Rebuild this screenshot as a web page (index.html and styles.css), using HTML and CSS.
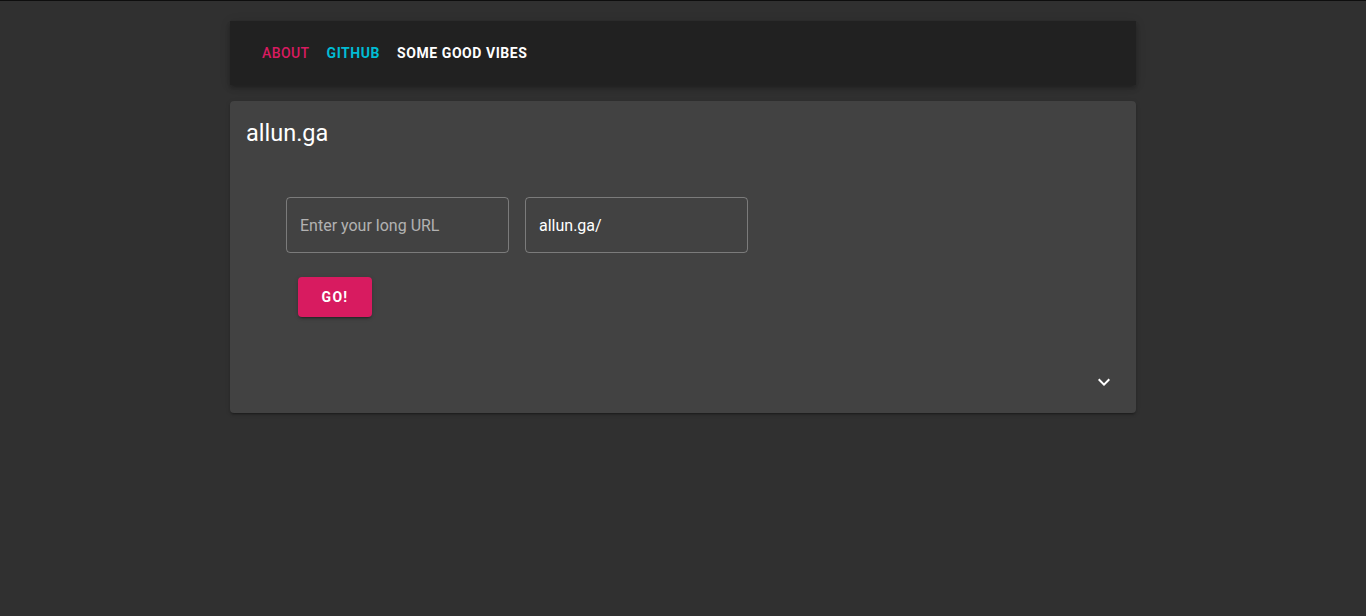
FILE: index.html
```html
<!DOCTYPE html>
<html lang="en">
<head>
    <meta charset="UTF-8">
    <meta name="viewport" content="width=device-width, initial-scale=1.0">
    <title>allun.ga</title>
    <link rel="stylesheet" href="styles.css">
</head>
<body>
    <div class="container">
        <nav class="toolbar">
            <a class="nav-link nav-about" href="#">About</a>
            <a class="nav-link nav-github" href="#">GitHub</a>
            <a class="nav-link nav-vibes" href="#">Some good vibes</a>
        </nav>

        <div class="card">
            <div class="card-title">allun.ga</div>
            <div class="card-body">
                <div class="fields">
                    <input class="field" type="text" placeholder="Enter your long URL">
                    <input class="field" type="text" value="allun.ga/">
                </div>
                <button class="btn-go">Go!</button>
            </div>
            <div class="card-actions">
                <svg class="icon-expand" viewBox="0 0 24 24" width="24" height="24">
                    <path d="M16.59 8.59L12 13.17 7.41 8.59 6 10l6 6 6-6z" fill="#ffffff"/>
                </svg>
            </div>
        </div>
    </div>
</body>
</html>
```

FILE: styles.css
```css
html, body {
    margin: 0;
    padding: 0;
}
body {
    background: #303030;
    border-top: 1px solid #0e0e0e;
    font-family: Roboto, "Liberation Sans", sans-serif;
    color: #ffffff;
    min-height: 615px;
}
.container {
    width: 906px;
    margin: 0 auto;
    padding-top: 20px;
}
.toolbar {
    display: flex;
    align-items: center;
    gap: 17px;
    height: 64px;
    padding: 0 32px;
    background: #212121;
    box-shadow: 0 2px 4px -1px rgba(0, 0, 0, .2), 0 4px 5px 0 rgba(0, 0, 0, .14), 0 1px 10px 0 rgba(0, 0, 0, .12);
}
.nav-link {
    font-size: 14px;
    font-weight: 700;
    text-transform: uppercase;
    letter-spacing: .04em;
    text-decoration: none;
}
.nav-about {
    color: #d81b60;
    font-weight: 500;
    letter-spacing: .03em;
}
.nav-github {
    color: #00bcd4;
}
.nav-vibes {
    color: #ffffff;
}
.card {
    margin-top: 16px;
    background: #424242;
    border-radius: 4px;
    box-shadow: 0 3px 1px -2px rgba(0, 0, 0, .2), 0 2px 2px 0 rgba(0, 0, 0, .14), 0 1px 5px 0 rgba(0, 0, 0, .12);
}
.card-title {
    padding: 16px 16px 0;
    font-size: 23.5px;
    line-height: 32px;
}
.card-body {
    padding: 48px 56px 0;
}
.fields {
    display: flex;
    gap: 16px;
}
.field {
    box-sizing: border-box;
    width: 223px;
    height: 56px;
    padding: 0 13px;
    background: transparent;
    border: 1px solid rgba(255, 255, 255, .3);
    border-radius: 4px;
    font-family: Roboto, "Liberation Sans", sans-serif;
    font-size: 16px;
    color: #ffffff;
    outline: none;
}
.field::placeholder {
    color: rgba(255, 255, 255, .6);
}
.btn-go {
    display: block;
    margin: 24px 0 0 12px;
    width: 74px;
    height: 40px;
    background: #d81b60;
    border: none;
    border-radius: 4px;
    color: #ffffff;
    font-family: Roboto, "Liberation Sans", sans-serif;
    font-size: 14px;
    font-weight: 700;
    letter-spacing: .09em;
    text-transform: uppercase;
    box-shadow: 0 3px 1px -2px rgba(0, 0, 0, .2), 0 2px 2px 0 rgba(0, 0, 0, .14), 0 1px 5px 0 rgba(0, 0, 0, .12);
}
.card-actions {
    display: flex;
    justify-content: flex-end;
    margin-top: 53px;
    padding: 0 20px 19px;
}
.icon-expand {
    display: block;
}
```
